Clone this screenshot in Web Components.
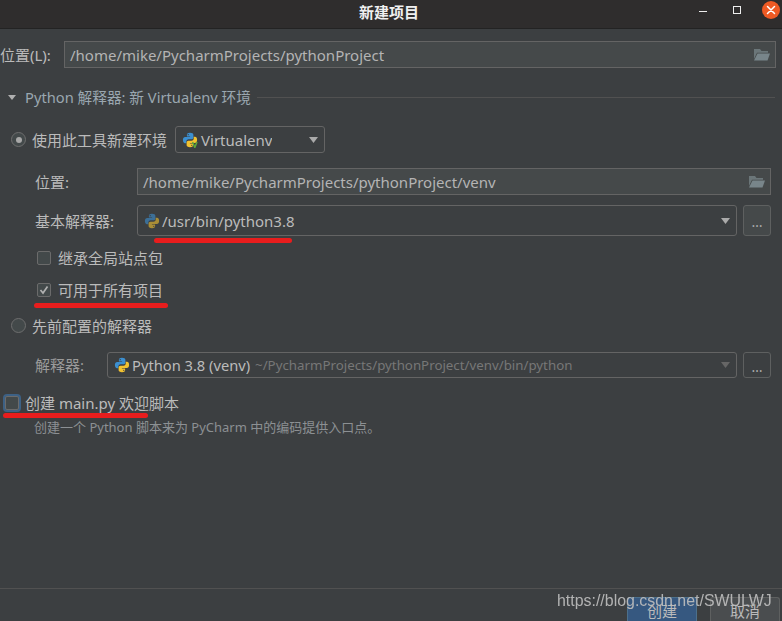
<!DOCTYPE html>
<html><head><meta charset="utf-8">
<style>
html,body{margin:0;padding:0;height:100%;background:#3c3f41;overflow:hidden}
body{font:15px/20px "Noto Sans","Noto Sans CJK SC",sans-serif;color:#bbbbbb}
</style></head><body>
<new-project></new-project>
<script>
const FONT='"Noto Sans","Noto Sans CJK SC",sans-serif';
const py=(s,dim,v)=>`<svg width="${s}" height="${s}" viewBox="0 0 16 16" style="flex:none;${dim?'opacity:.6':''}"><path fill="#3c8fd0" d="M8 .8C5.200.8 4.900 2 4.900 3v1.500H8.100v.6H3.200C1.900 5.100.9 6.100.9 8.100s.9 3.100 2.100 3.100h1.300V9.500c0-1.300 1.100-2.300 2.300-2.300h3c1 0 1.800-.8 1.800-1.800V3C11.400 1.700 10.200.8 8 .8zM6.200 2a.65.65 0 1 1 0 1.300.65.65 0 0 1 0-1.300z"/><path fill="#f2c230" d="M8 15.200c2.800 0 3.100-1.200 3.100-2.200v-1.500H7.900v-.6h4.900c1.300 0 2.300-1 2.300-3s-.9-3.100-2.100-3.100h-1.300v1.700c0 1.300-1.100 2.300-2.300 2.300h-3c-1 0-1.800.8-1.800 1.800V13c0 1.300 1.200 2.200 3.400 2.200zM9.800 14a.65.65 0 1 1 0-1.300.65.65 0 0 1 0 1.300z"/>${v?'<path d="M10.600 10l2.200 5.500L15 10" fill="none" stroke="#5fa83a" stroke-width="1.500"/>':''}</svg>`;
const folder=`<svg width="16" height="12" viewBox="0 0 16 12" style="flex:none"><path fill="#6b7679" d="M0 0h6l1.500 2H14v1.800H3L0 10z"/><path fill="#78858a" d="M3.500 4.500H16l-2.500 7H0z"/></svg>`;
const caret=(c,w=9,h=6)=>`<svg width="${w}" height="${h}" viewBox="0 0 10 6" preserveAspectRatio="none" style="flex:none"><path fill="${c}" d="M0 0h10L5 6z"/></svg>`;
function def(name,css,html){
  customElements.define(name,class extends HTMLElement{
    constructor(){super();const r=this.attachShadow({mode:'open'});
      r.innerHTML=`<style>${css}</style>`+(typeof html==='function'?html(this):html);}
  });
}
def('title-bar',`:host{display:flex;align-items:center;justify-content:center;position:relative;height:29px;box-sizing:border-box;background:#2f2d2d;border-bottom:1px solid #232323;color:#f0f0f0;font:700 15px/20px ${FONT};padding:0 4px 5px 0}
 .b{position:absolute;display:block}
 .min{left:699px;top:11px;width:8px;height:0;border-top:1.500px solid #eee;}
 .max{left:733px;top:6px;width:6px;height:6px;border:1.500px solid #eee}
 .close{left:762px;top:1px;width:18px;height:18px}`,
 `<slot></slot><span class="b min"></span><span class="b max"></span>
 <svg class="b close" viewBox="0 0 18 18"><circle cx="9" cy="9" r="9" fill="#ee5a24"/><path d="M5.500 5.500l7 7M12.500 5.500l-7 7" stroke="#fff" stroke-width="1.500" stroke-linecap="round"/></svg>`);
def('text-field',`:host{display:flex;flex:1;align-items:center;justify-content:space-between;height:27px;box-sizing:border-box;padding:0 5px 0 5px;background:#45494a;border:1px solid #646464;color:#b4b4b4;font-size:15px}`,`<slot></slot>${folder}`);
def('combo-box',`:host{display:flex;flex:1;align-items:center;justify-content:space-between;box-sizing:border-box;height:var(--h,31px);padding:0 6px 0 var(--pl,6px);border:1px solid #646464;border-radius:3px;background:#3c3f41;color:#bbb;font-size:var(--fs,15px);min-width:0;gap:5px}
 .l{display:flex;align-items:center;gap:var(--ig,2px);white-space:nowrap;overflow:hidden}`,
 el=>`<span class="l">${py(16,el.hasAttribute('dim'),el.hasAttribute('venv'))}<slot></slot></span>${caret(el.hasAttribute('disabled')?'#666':'#aaa')}`);
def('dots-btn',`:host{display:flex;flex:none;width:28px;box-sizing:border-box;height:var(--h,31px);border:1px solid #5e6060;border-radius:3px;background:var(--bg,#45494a);color:#aaa;align-items:center;justify-content:center;font-size:14px;padding-top:3px}`,`…`);
def('radio-row',`:host{display:flex;align-items:center;gap:6px;height:27px;color:#bbb}
 .r{width:13px;height:13px;border:1px solid #6e6e6e;border-radius:50%;background:#43494a;display:flex;align-items:center;justify-content:center;flex:none}
 .d{width:6px;height:6px;border-radius:50%;background:#a8a8a8}`,
 el=>`<span class="r">${el.hasAttribute('checked')?'<span class="d"></span>':''}</span><slot></slot>`);
def('check-row',`:host{display:flex;align-items:center;gap:7px;height:20px;color:#bbb}
 .c{width:12px;height:12px;border:1px solid #6b6b6b;border-radius:2px;background:#43494a;flex:none;display:block}
 :host([focus]){gap:6px}
 :host([focus]) .c{box-shadow:0 0 0 2px #3d6185}
 svg{display:block}`,
 el=>`<span class="c">${el.hasAttribute('checked')?'<svg width="12" height="12" viewBox="0 0 12 12"><path d="M2.500 6l2.500 3L9.500 2.500" fill="none" stroke="#b0b0b0" stroke-width="1.700"/></svg>':''}</span><slot></slot>`);
def('section-head',`:host{display:flex;align-items:center;color:#9aa7b0;font-size:14.700px;gap:6px}
 .t{flex:none;margin:0 3px 0 8px;display:flex}
 .line{flex:1;height:1px;background:#515151;margin-right:1px}`,
 `<span class="t">${caret('#b0b0b0',8,5)}</span><slot></slot><span class="line"></span>`);
def('push-btn',`:host{display:flex;align-items:center;justify-content:center;width:70px;height:24px;box-sizing:border-box;border:1px solid #5e6060;border-bottom:0;border-radius:3px 3px 0 0;background:#4a4d4f;color:#bbb;font-size:15px;padding-top:3px}
 :host([primary]){background:#365880;border-color:#4c708c;color:#bbb}`,`<slot></slot>`);
def('new-project',`:host{display:flex;flex-direction:column;position:relative;width:782px;height:621px;overflow:hidden;background:#3c3f41;color:#bbb;font:15px/20px ${FONT}}
 .body{flex:1;display:flex;flex-direction:column;padding:12px 6px 0 0;box-sizing:border-box}
 .row{display:flex;align-items:center}
 .loc{height:27px}
 .loc label{width:64px;flex:none}
 section-head{margin-top:19px}
 .radio1{margin:19px 0 0 11px}
 .radio1 combo-box{--h:27px;--pl:6px;--ig:3px;flex:none;width:150px;margin-left:2px}
 .sub{padding-left:35px}
 .sub label{width:102px;flex:none}
 .venv{margin-top:15px;padding-right:5px}
 .base{margin-top:10px;height:31px;padding-right:5px;gap:6px}
 .base label{margin-right:-6px}
 check-row{margin-left:37px}
 .c1{margin-top:12px}.c2{margin-top:12px}
 .radio2{margin:12px 0 0 11px}
 .interp{margin-top:13px;height:26px;padding-right:5px;gap:6px;--h:26px;--bg:#3c3f41;--fs:14.700px}
 .interp label{width:72px;flex:none;margin-right:-6px;color:#9a9a9a}
 .muted{color:#777;font-size:13.300px;margin-left:-3px}
 .focus{margin:15px 0 0 5px}
 .help{margin:5px 0 0 34px;font-size:13px;line-height:18px;color:#8c9093}
 .foot{display:flex;justify-content:flex-end;gap:13px;padding:8px 2px 0 0;border-top:1px solid #515151;height:33px;box-sizing:border-box}
 .red{position:absolute;height:5px;background:#e81d1d;border-radius:3px}
 .wm{position:absolute;left:557px;top:591px;font:15.930px/20px "Liberation Sans",sans-serif;color:#bdbdbd;white-space:nowrap;opacity:.92;filter:blur(.35px)}`,
 `<title-bar>新建项目</title-bar>
 <div class="body">
  <div class="row loc"><label>位置(L):</label><text-field>/home/mike/PycharmProjects/pythonProject</text-field></div>
  <section-head>Python 解释器: 新 Virtualenv 环境</section-head>
  <radio-row class="radio1" checked>使用此工具新建环境<combo-box venv>Virtualenv</combo-box></radio-row>
  <div class="row sub venv"><label>位置:</label><text-field>/home/mike/PycharmProjects/pythonProject/venv</text-field></div>
  <div class="row sub base"><label>基本解释器:</label><combo-box dim>/usr/bin/python3.8</combo-box><dots-btn></dots-btn></div>
  <check-row class="c1">继承全局站点包</check-row>
  <check-row class="c2" checked>可用于所有项目</check-row>
  <radio-row class="radio2">先前配置的解释器</radio-row>
  <div class="row sub interp"><label>解释器:</label><combo-box disabled><span>Python 3.8 (venv)</span>&nbsp;<span class="muted">~/PycharmProjects/pythonProject/venv/bin/python</span></combo-box><dots-btn></dots-btn></div>
  <check-row class="focus" focus>创建 main.py 欢迎脚本</check-row>
  <div class="help">创建一个 Python 脚本来为 PyCharm 中的编码提供入口点。</div>
 </div>
 <div class="foot"><push-btn primary>创建</push-btn><push-btn>取消</push-btn></div>
 <span class="red" style="left:154px;top:238px;width:138px"></span>
 <span class="red" style="left:34px;top:303px;width:134px"></span>
 <span class="red" style="left:3px;top:413px;width:145px"></span>
 <span class="wm">https://blog.csdn.net/SWULWJ</span>`);
</script></body></html>
